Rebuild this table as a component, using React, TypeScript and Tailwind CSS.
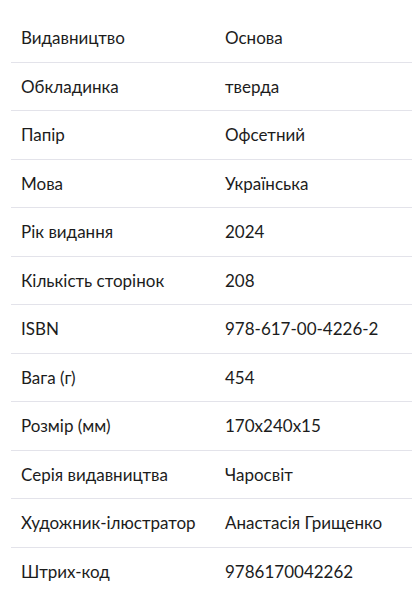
const specs: [string, string][] = [
  ["Видавництво", "Основа"],
  ["Обкладинка", "тверда"],
  ["Папір", "Офсетний"],
  ["Мова", "Українська"],
  ["Рік видання", "2024"],
  ["Кількість сторінок", "208"],
  ["ISBN", "978-617-00-4226-2"],
  ["Вага (г)", "454"],
  ["Розмір (мм)", "170x240x15"],
  ["Серія видавництва", "Чаросвіт"],
  ["Художник-ілюстратор", "Анастасія Грищенко"],
  ["Штрих-код", "9786170042262"],
];

export default function App() {
  return (
    <div className="min-h-screen bg-white pl-[11px] pt-[14px] font-['Lato',sans-serif] text-[17px] text-[#1c1c1c]">
      {specs.map(([label, value], i) => (
        <div
          key={label}
          className={`flex h-[48.5px] items-center ${
            i < specs.length - 1 ? "border-b border-[#e3e3ea]" : ""
          }`}
        >
          <div className="w-[214px] shrink-0 pl-[10px]">{label}</div>
          <div>{value}</div>
        </div>
      ))}
    </div>
  );
}
